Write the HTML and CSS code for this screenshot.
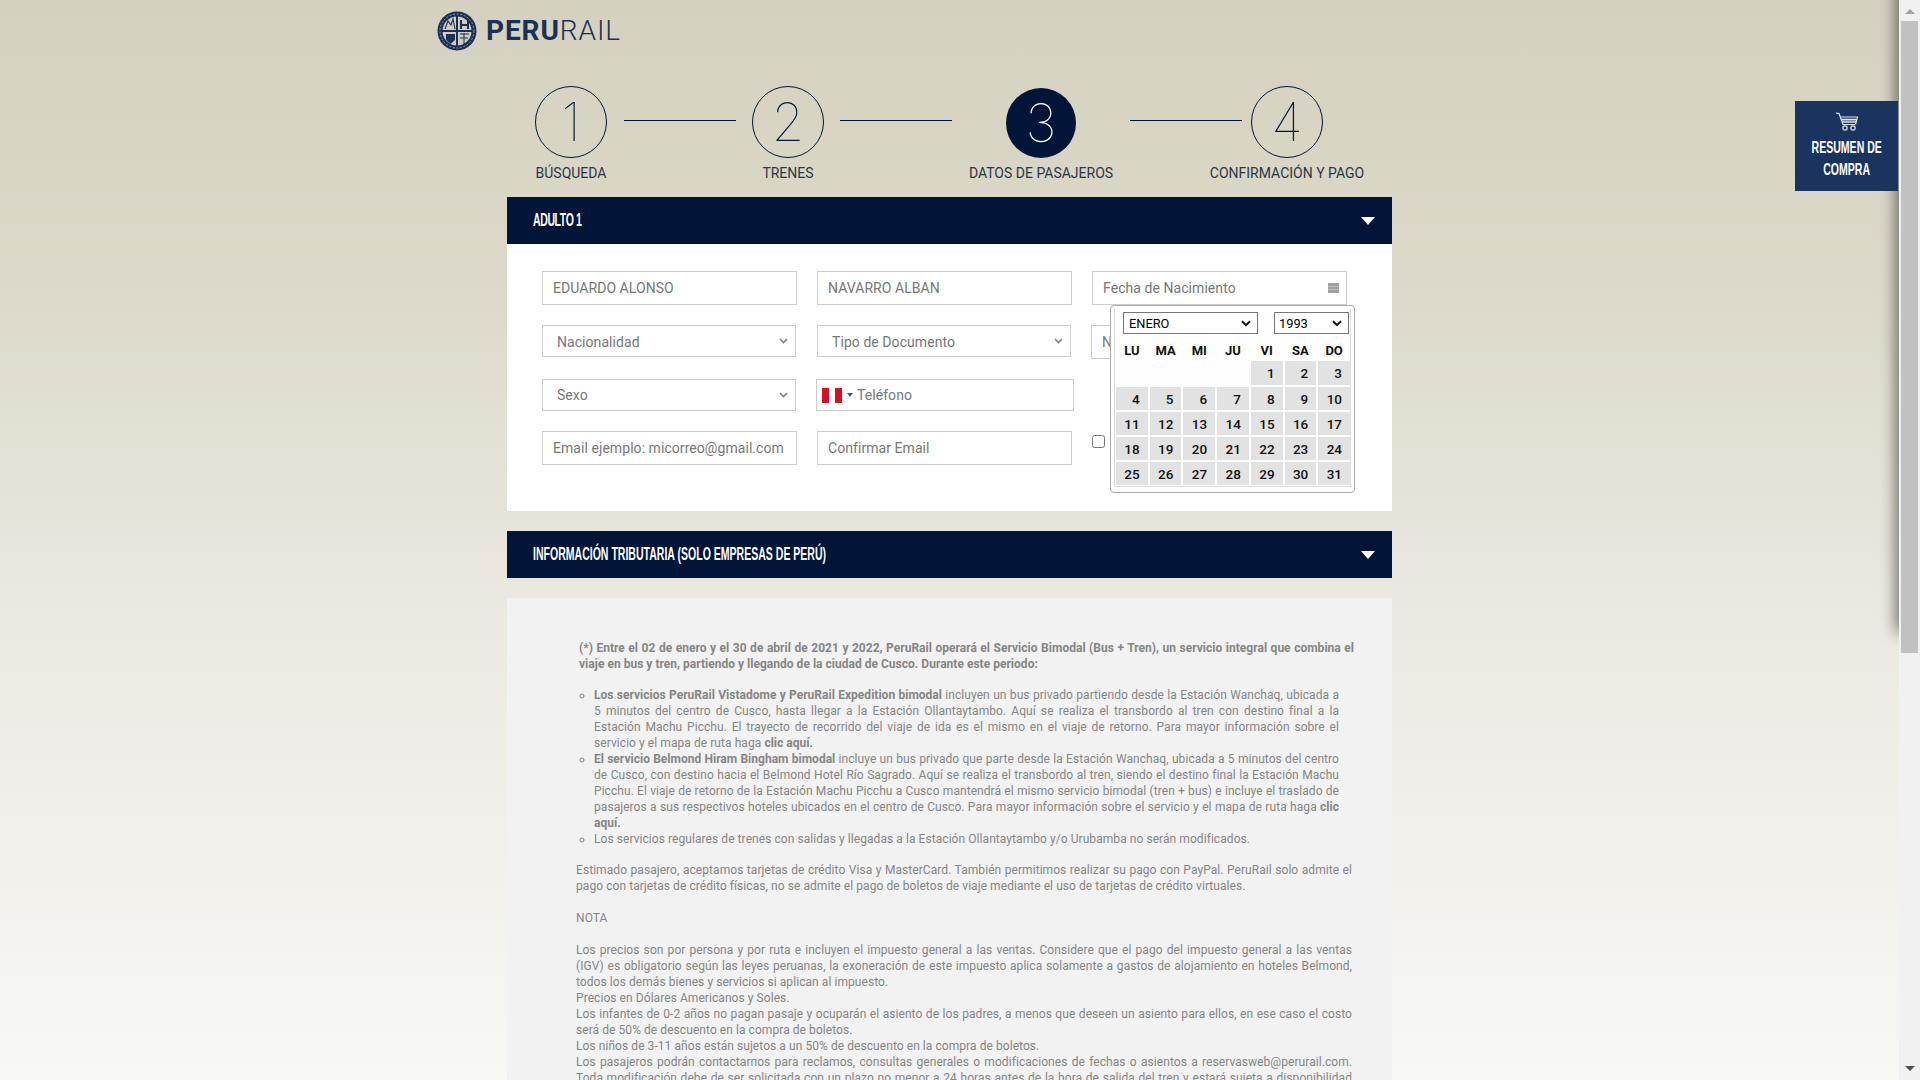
FILE: index.html
```html
<!DOCTYPE html>
<html lang="es">
<head>
<meta charset="utf-8">
<title>PeruRail</title>
<link rel="stylesheet" href="styles.css">
</head>
<body>
<div class="app">
  <div class="page">
    <div class="edge-shadow"></div>
    <aside class="cart-tab">
      <svg class="cart-icon" width="24" height="20" viewBox="0 0 24 20" fill="none" stroke="#dfe3ea" stroke-width="1.2">
        <path d="M1 1 L4 1.6 L8 12.5 H20"/>
        <path d="M5 5 H22.5 L20.5 12.5"/>
        <path d="M6 7.6 H21.5 M7 10 H21" stroke-width="1.6"/>
        <circle cx="10" cy="16" r="2.2"/>
        <circle cx="18" cy="16" r="2.2"/>
      </svg>
      <span class="cart-label">RESUMEN DE<br>COMPRA</span>
    </aside>

    <div class="wrap">
      <a class="logo" href="#">
        <svg class="globe" width="40" height="40" viewBox="0 0 40 40">
          <circle cx="20" cy="20" r="19.5" fill="#1b2f57"/>
          <circle cx="20" cy="20" r="14.5" fill="#cfcdc0"/>
          <path d="M20 2 V38 M2 20 H38" stroke="#1b2f57" stroke-width="2"/>
          <path d="M8 18 L11 10 L14 14 L16 8 L18 18" fill="none" stroke="#1b2f57" stroke-width="1.1"/>
          <path d="M23 9 H25 V13 H30 V9 H32 V18 H30 V15 H25 V18 H23 Z" fill="#1b2f57"/>
          <path d="M9 23 H18 V29 L13.5 33 L9 29 Z" fill="#1b2f57"/>
          <path d="M23 23 H32 M23 27 H31 M27 22 V33" stroke="#1b2f57" stroke-width="1"/>
          <circle cx="20" cy="20" r="17" fill="none" stroke="#cfcdc0" stroke-width=".7" stroke-dasharray="2 1.6"/>
        </svg>
        <span class="logo-text"><b>PERU</b>RAIL</span>
      </a>

      <div class="column">
        <ol class="steps">
          <li class="step"><span class="circle">1</span><span class="step-label">BÚSQUEDA</span></li>
          <li class="link"></li>
          <li class="step"><span class="circle">2</span><span class="step-label">TRENES</span></li>
          <li class="link link-mid"></li>
          <li class="step step-current"><span class="circle">3</span><span class="step-label">DATOS DE PASAJEROS</span></li>
          <li class="link"></li>
          <li class="step step-last"><span class="circle">4</span><span class="step-label">CONFIRMACIÓN Y PAGO</span></li>
        </ol>

        <div class="bar"><span class="bar-title bar-title-short">ADULTO 1</span><i class="caret"></i></div>
        <form class="passenger">
          <input class="field" type="text" value="EDUARDO ALONSO">
          <input class="field" type="text" value="NAVARRO ALBAN">
          <div class="date-cell">
            <input class="field" type="text" placeholder="Fecha de Nacimiento">
            <svg class="cal-icon" width="11" height="10" viewBox="0 0 11 10"><rect width="11" height="10" fill="#a2a2a2"/><path d="M0 3.5 H11 M0 6.5 H11" stroke="#bdbdbd"/></svg>
            <div class="picker">
              <div class="picker-inner">
                <div class="picker-head">
                  <select class="pick pick-month"><option>ENERO</option></select>
                  <select class="pick pick-year"><option>1993</option></select>
                </div>
                <div class="cal">
                  <b>LU</b><b>MA</b><b>MI</b><b>JU</b><b>VI</b><b>SA</b><b>DO</b>
                  <i></i><i></i><i></i><i></i>
                  <span>1</span><span>2</span><span>3</span>
                  <span>4</span><span>5</span><span>6</span><span>7</span><span>8</span><span>9</span><span>10</span>
                  <span>11</span><span>12</span><span>13</span><span>14</span><span>15</span><span>16</span><span>17</span>
                  <span>18</span><span>19</span><span>20</span><span>21</span><span>22</span><span>23</span><span>24</span>
                  <span>25</span><span>26</span><span>27</span><span>28</span><span>29</span><span>30</span><span>31</span>
                </div>
              </div>
            </div>
          </div>

          <select class="choice"><option>Nacionalidad</option></select>
          <select class="choice"><option>Tipo de Documento</option></select>
          <input class="field field-shift" type="text" placeholder="Número de Documento">

          <select class="choice choice-flat"><option>Sexo</option></select>
          <div class="phone">
            <svg class="flag" width="20" height="15" viewBox="0 0 20 15"><rect width="20" height="15" fill="#fff"/><rect width="7" height="15" fill="#d91023"/><rect x="13" width="7" height="15" fill="#d91023"/></svg>
            <i class="flag-caret"></i>
            <span>Teléfono</span>
          </div>
          <div></div>

          <input class="field" type="text" placeholder="Email ejemplo: micorreo@gmail.com">
          <input class="field" type="text" placeholder="Confirmar Email">
          <label class="check"><input type="checkbox"></label>
        </form>

        <div class="bar bar-second"><span class="bar-title">INFORMACIÓN TRIBUTARIA (SOLO EMPRESAS DE PERÚ)</span><i class="caret"></i></div>

        <section class="notes">
          <p class="lead"><b>(*) Entre el 02 de enero y el 30 de abril de 2021 y 2022, PeruRail operará el Servicio Bimodal (Bus + Tren), un servicio integral que combina el viaje en bus y tren, partiendo y llegando de la ciudad de Cusco. Durante este periodo:</b></p>
          <ul class="services">
            <li><b>Los servicios PeruRail Vistadome y PeruRail Expedition bimodal</b> incluyen un bus privado partiendo desde la Estación Wanchaq, ubicada a 5 minutos del centro de Cusco, hasta llegar a la Estación Ollantaytambo. Aquí se realiza el transbordo al tren con destino final a la Estación Machu Picchu. El trayecto de recorrido del viaje de ida es el mismo en el viaje de retorno. Para mayor información sobre el servicio y el mapa de ruta haga <b>clic aquí.</b></li>
            <li><b>El servicio Belmond Hiram Bingham bimodal</b> incluye un bus privado que parte desde la Estación Wanchaq, ubicada a 5 minutos del centro de Cusco, con destino hacia el Belmond Hotel Río Sagrado. Aquí se realiza el transbordo al tren, siendo el destino final la Estación Machu Picchu. El viaje de retorno de la Estación Machu Picchu a Cusco mantendrá el mismo servicio bimodal (tren + bus) e incluye el traslado de pasajeros a sus respectivos hoteles ubicados en el centro de Cusco. Para mayor información sobre el servicio y el mapa de ruta haga <b>clic aquí.</b></li>
            <li>Los servicios regulares de trenes con salidas y llegadas a la Estación Ollantaytambo y/o Urubamba no serán modificados.</li>
          </ul>
          <p>Estimado pasajero, aceptamos tarjetas de crédito Visa y MasterCard. También permitimos realizar su pago con PayPal. PeruRail solo admite el pago con tarjetas de crédito físicas, no se admite el pago de boletos de viaje mediante el uso de tarjetas de crédito virtuales.</p>
          <p>NOTA</p>
          <p>Los precios son por persona y por ruta e incluyen el impuesto general a las ventas. Considere que el pago del impuesto general a las ventas (IGV) es obligatorio según las leyes peruanas, la exoneración de este impuesto aplica solamente a gastos de alojamiento en hoteles Belmond, todos los demás bienes y servicios si aplican al impuesto.<br>
          Precios en Dólares Americanos y Soles.<br>
          Los infantes de 0-2 años no pagan pasaje y ocuparán el asiento de los padres, a menos que deseen un asiento para ellos, en ese caso el costo será de 50% de descuento en la compra de boletos.<br>
          Los niños de 3-11 años están sujetos a un 50% de descuento en la compra de boletos.<br>
          Los pasajeros podrán contactarnos para reclamos, consultas generales o modificaciones de fechas o asientos a reservasweb@perurail.com. Toda modificación debe de ser solicitada con un plazo no menor a 24 horas antes de la hora de salida del tren y estará sujeta a disponibilidad de espacio en el servicio solicitado por el pasajero.</p>
        </section>
      </div>
    </div>
  </div>

  <div class="scrollbar">
    <i class="sb-up"></i>
    <div class="sb-track"><div class="sb-thumb"></div></div>
    <i class="sb-down"></i>
  </div>
</div>
</body>
</html>
```

FILE: styles.css
```css
* { box-sizing: border-box; }
html, body { margin: 0; height: 100%; overflow: hidden; }
body { font-family: Roboto, "Liberation Sans", sans-serif; font-size: 14px; color: #333; }

.app { display: flex; height: 1080px; }

.page {
  position: relative;
  flex: 1;
  min-width: 0;
  height: 1080px;
  overflow: hidden;
  background: linear-gradient(#d5d1c0 0, #dcd9ca 280px, #ebe9e1 620px, #f8f8f5 1080px);
}

.edge-shadow {
  position: absolute;
  top: -20px;
  right: -10px;
  width: 10px;
  height: 650px;
  box-shadow: 0 0 16px 2px rgba(0, 0, 0, .62);
}

.cart-tab {
  position: absolute;
  top: 101px;
  right: 1px;
  width: 103px;
  height: 90px;
  background: #1b335f;
  color: #fff;
  display: flex;
  flex-direction: column;
  align-items: center;
  padding-top: 11px;
}
.cart-icon { display: block; margin-left: 1px; flex: none; }
.cart-label {
  font-family: "Liberation Sans", sans-serif;
  font-weight: 700;
  font-size: 17px;
  line-height: 22px;
  text-align: center;
  white-space: nowrap;
  margin-top: 5px;
  transform: scaleX(.62);
}

.wrap { width: 885px; margin: 0 auto; }

.logo {
  display: flex;
  align-items: center;
  height: 62px;
  margin-left: -70px;
  text-decoration: none;
  color: #1b2f57;
}
.globe { display: block; margin-right: 9px; flex: none; }
.logo-text { font-size: 28px; font-weight: 300; letter-spacing: .9px; line-height: 1; }
.logo-text b { font-weight: 700; }

.column { width: 885px; }

.steps {
  list-style: none;
  display: flex;
  align-items: flex-start;
  margin: 0;
  padding: 24px 0 0 28px;
  height: 135px;
}
.step { width: 72px; display: flex; flex-direction: column; align-items: center; flex: none; }
.circle {
  width: 72px;
  height: 72px;
  border: 1px solid #001537;
  border-radius: 50%;
  display: flex;
  align-items: center;
  justify-content: center;
  padding-top: 1px;
  font-family: Inter, Roboto, sans-serif;
  font-size: 53px;
  font-weight: 100;
  line-height: 1;
  color: #001537;
}
.step-label { margin-top: 7px; line-height: 16px; white-space: nowrap; font-size: 14px; color: #2a3648; }
.link { width: 112px; height: 1px; background: #001537; margin: 34px 16px 0 17px; flex: none; }
.link-mid { margin: 34px 17px 0 16px; }
.step-current { width: 144px; }
.step-current .circle { width: 70px; height: 70px; background: #001537; color: #fff; border: 0; margin-top: 2px; }
.step-last { margin-left: -7px; }

.bar {
  height: 47px;
  background: #001537;
  display: flex;
  align-items: center;
  justify-content: space-between;
  padding: 0 17px 0 26px;
}
.bar-second { margin-top: 20px; }
.bar-title {
  font-family: "Liberation Sans", sans-serif;
  font-weight: 700;
  font-size: 18px;
  color: #fff;
  white-space: nowrap;
  transform: scaleX(.585);
  transform-origin: left center;
}
.bar-title-short { letter-spacing: -.7px; }
.caret {
  width: 0;
  height: 0;
  border-left: 7px solid transparent;
  border-right: 7px solid transparent;
  border-top: 8px solid #fff;
}

.passenger {
  background: #fff;
  height: 267px;
  padding: 27px 0 0 35px;
  display: grid;
  grid-template-columns: 255px 255px 255px;
  grid-template-rows: 34px 34px 32px 34px;
  column-gap: 20px;
  row-gap: 20px;
  align-items: start;
}

.field {
  display: block;
  width: 255px;
  height: 34px;
  border: 1px solid #ccc;
  border-radius: 0;
  background: #fff;
  padding: 0 10px;
  font: 14px Roboto, sans-serif;
  letter-spacing: .06px;
  color: #777;
  outline: none;
}
.field::placeholder { color: #777; opacity: 1; }
.field-shift { margin-left: -1px; }

.choice {
  display: block;
  width: 254px;
  height: 32px;
  border: 1px solid #ccc;
  border-radius: 0;
  background: #fff url("data:image/svg+xml,%3Csvg xmlns='http://www.w3.org/2000/svg' width='9' height='6' viewBox='0 0 9 6'%3E%3Cpath d='M1 1l3.5 3.5L8 1' fill='none' stroke='%23808080' stroke-width='1.6'/%3E%3C/svg%3E") no-repeat right 7px center;
  appearance: none;
  -webkit-appearance: none;
  padding: 2px 20px 0 14px;
  font: 14px Roboto, sans-serif;
  letter-spacing: .06px;
  color: #777;
}
.choice-flat { padding-top: 0; }

.phone {
  width: 258px;
  height: 32px;
  margin-left: -1px;
  border: 1px solid #ccc;
  background: #fff;
  display: flex;
  align-items: center;
  padding-left: 5px;
  color: #777;
  letter-spacing: .06px;
}
.flag { display: block; flex: none; }
.flag-caret {
  width: 0;
  height: 0;
  margin: 0 4px 0 5px;
  border-left: 3px solid transparent;
  border-right: 3px solid transparent;
  border-top: 4px solid #555;
}

.check { display: block; padding-top: 4px; line-height: 0; }
.check input { margin: 0; width: 13px; height: 13px; }

.date-cell { position: relative; }
.cal-icon { position: absolute; top: 12px; right: 8px; }

.picker {
  position: absolute;
  top: 34px;
  left: 18px;
  width: 245px;
  height: 188px;
  background: #fff;
  border: 1px solid #aaa;
  border-radius: 4px;
  padding: 3px;
  z-index: 5;
}
.picker-inner { height: 178px; border: 1px solid #ddd; border-top: 0; background: #fdfefd; padding: 0 1px; }
.picker-head { display: flex; padding: 3px 0 0 7px; justify-content: space-between; }
.pick {
  height: 22px;
  font: 12.8px Roboto, sans-serif;
  color: #000;
  border: 1px solid #767676;
  border-radius: 0;
  appearance: none;
  -webkit-appearance: none;
  background: #fff url("data:image/svg+xml,%3Csvg xmlns='http://www.w3.org/2000/svg' width='10' height='7' viewBox='0 0 10 7'%3E%3Cpath d='M1 1.2l4 4 4-4' fill='none' stroke='%23111' stroke-width='2'/%3E%3C/svg%3E") no-repeat right 6px center;
}
.pick-month { width: 135px; padding: 0 18px 0 5px; }
.pick-year { width: 75px; padding: 0 18px 0 4px; }

.cal {
  display: grid;
  grid-template-columns: repeat(7, 1fr);
  grid-template-rows: 25px 24px repeat(4, 23px);
  column-gap: 2px;
  row-gap: 2px;
  width: 234px;
}
.cal b { font-size: 13px; padding-top: 9px; line-height: 16px; text-align: center; color: #111; font-weight: 700; }
.cal span {
  background: #e2e2e2;
  text-align: right;
  padding-right: 8px;
  font-size: 13.5px;
  font-weight: 500;
  line-height: 24px;
  color: #121212;
}

.notes {
  margin-top: 20px;
  background: #f2f2f2;
  height: 520px;
  padding: 42px 40px 0 69px;
  font-size: 12px;
  line-height: 16px;
  color: #858585;
  letter-spacing: .065px;
  text-align: justify;
}
.notes p { margin: 0 0 16px; }
.notes b { font-weight: 700; letter-spacing: .02px; }
.notes .lead { margin: 0 -2px 15px 3px; }
.services { margin: 0 13px 15px 0; padding: 0 0 0 18px; list-style: circle; }

.scrollbar {
  width: 21px;
  flex: none;
  background: #f1f1f1;
  display: flex;
  flex-direction: column;
  align-items: center;
  height: 1080px;
}
.sb-up, .sb-down { width: 0; height: 0; flex: none; border-left: 5px solid transparent; border-right: 5px solid transparent; }
.sb-up { margin-top: 9px; border-bottom: 5px solid #a3a3a3; }
.sb-down { margin: 0 0 9px; border-top: 5px solid #505050; }
.sb-track { flex: 1; width: 100%; padding: 7px 2px 0; }
.sb-thumb { height: 632px; background: #c1c1c1; }
```
